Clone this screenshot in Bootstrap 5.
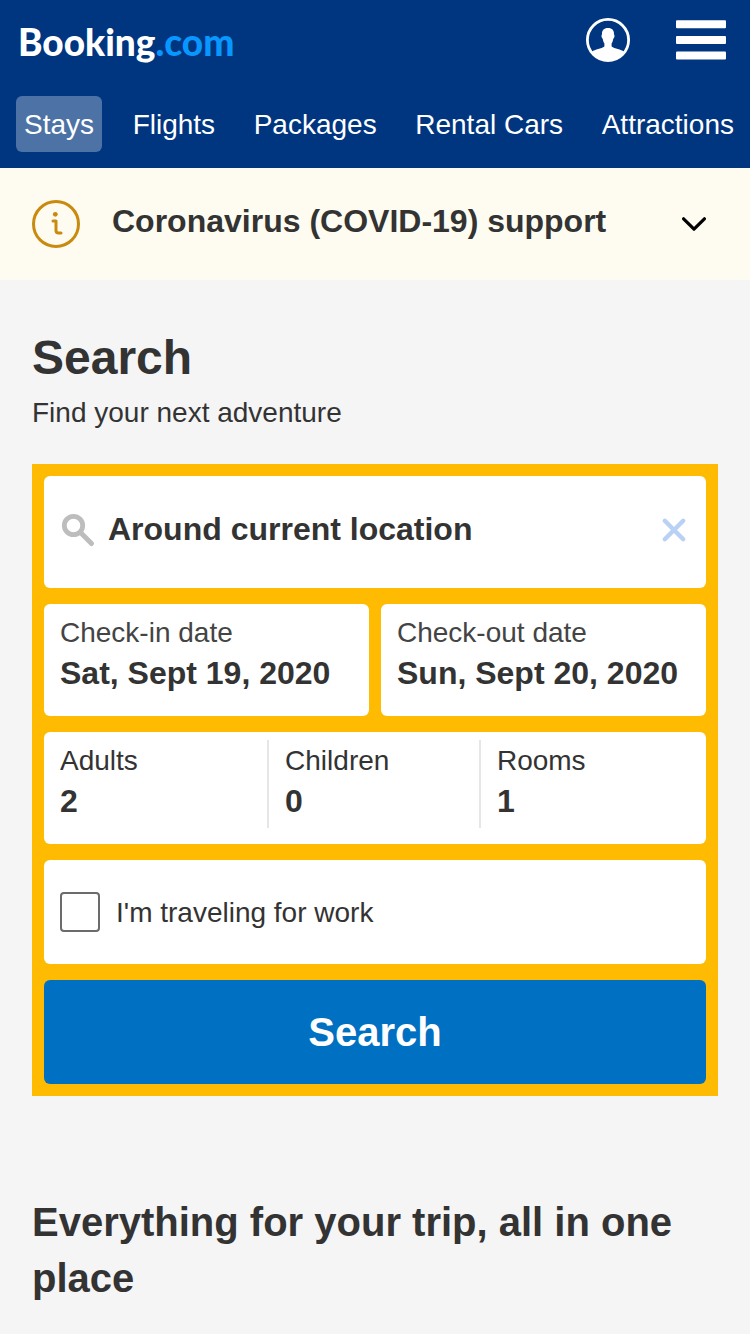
<!DOCTYPE html>
<html lang="en">
<head>
<meta charset="utf-8">
<meta name="viewport" content="width=device-width, initial-scale=1">
<title>Booking.com</title>
<link rel="stylesheet" href="https://cdn.jsdelivr.net/npm/bootstrap@5.3.0/dist/css/bootstrap.min.css">
<style>
body { font-family: "Liberation Sans", Arial, sans-serif; font-size: 28px; line-height: 40px; color: #333; background: #f5f5f5; }
.site-header { background: #003580; }
.top-row { padding: 10px 24px 22px 18px; }
.brand-logo { font-family: Lato, sans-serif; font-size: 37px; font-weight: 900; line-height: 64px; color: #fff; }
.brand-logo span { color: #0896ff; }
.tool-group { gap: 46px; margin-top: -4px; }
.tabs-row { padding: 0 8px 16px 16px; }
.tabs-row a { color: #fff; line-height: 54px; padding: 2px 8px 0; border-radius: 6px; }
.tabs-row a.active { background: #4d72a6; }
.notice-bar { background: #fefcf0; color: #333; padding: 32px 44px 32px 32px; min-height: 112px; }
.notice-title { font-size: 32px; font-weight: 700; margin: -6px 0 0 32px; }
.main-area { padding: 48px 32px 28px; }
.main-area h1 { font-size: 48px; line-height: 60px; font-weight: 700; }
.main-area h2 { font-size: 40px; line-height: 56px; font-weight: 700; margin-top: 98px; }
.sub-title { line-height: 42px; }
.search-box { background: #febb02; padding: 12px; gap: 16px; margin-top: 30px; }
.field-box { background: #fff; border-radius: 6px; }
.place-box { height: 112px; padding: 0 16px 4px; }
.bare { appearance: none; background: transparent; border: 0; padding: 0; width: 100%; min-width: 0; outline-offset: 2px; font-size: 32px; line-height: 40px; height: 40px; font-weight: 700; color: #333; }
.place-box .bare { padding-bottom: 2px; }
.date-row { display: grid; grid-template-columns: 1fr 1fr; gap: 12px; }
.date-box { padding: 9px 16px 23px; }
.date-box label { color: #444; }
.guest-box { display: grid; grid-template-columns: 226px 1fr 1fr; grid-template-columns: 34fr 32fr 34fr; padding: 8px 0 16px; }
.guest-cell { padding: 1px 16px 7px; }
.guest-cell:not(:last-child) { border-right: 2px solid #e6e6e6; }
.work-box { padding: 32px 16px; gap: 16px; }
.work-box label { padding-top: 2px; line-height: 38px; }
.work-box .form-check-input { width: 40px; height: 40px; margin: 0; border: 2px solid #6b6b6b; border-radius: 4px; }
.search-btn { background: #0071c2; color: #fff; font-size: 40px; font-weight: 700; line-height: 56px; padding: 24px; border: 0; border-radius: 6px; }
.search-btn:hover { background: #005999; color: #fff; }
</style>
</head>
<body>
<header class="site-header">
  <div class="top-row d-flex justify-content-between align-items-center">
    <a class="brand-logo text-decoration-none" href="#">Booking<span>.com</span></a>
    <div class="tool-group d-flex align-items-center">
      <button class="btn p-0 border-0 d-flex" type="button" aria-label="Your account">
        <svg width="44" height="44" viewBox="0 0 44 44"><circle cx="22" cy="22" r="20.6" fill="none" stroke="#fff" stroke-width="2.8"/><path fill="#fff" d="M22 10c4.200 0 6.300 2.500 6 6.600 1 .4.600 3.400-.8 4.400-.3 2.200-1 3.500-1.600 4.400v3.200c3 2.400 9.400 2.700 12.500 5.100C34.500 39.600 28.500 43 22 43S9.500 39.600 5.900 33.700c3.100-2.400 9.500-2.700 12.500-5.100v-3.200c-.6-.9-1.300-2.200-1.600-4.400-1.400-1-1.800-4-.8-4.400C15.700 12.500 17.800 10 22 10z"/></svg>
      </button>
      <button class="btn p-0 border-0 d-flex" type="button" aria-label="Menu">
        <svg width="50" height="40" viewBox="0 0 50 40" fill="#fff"><rect y=".3" width="50" height="8" rx="1"/><rect y="16" width="50" height="8" rx="1"/><rect y="31.500" width="50" height="8" rx="1"/></svg>
      </button>
    </div>
  </div>
  <nav class="tabs-row d-flex justify-content-between" aria-label="Products">
    <a class="active text-decoration-none" href="#" aria-current="page">Stays</a>
    <a class="text-decoration-none" href="#">Flights</a>
    <a class="text-decoration-none" href="#">Packages</a>
    <a class="text-decoration-none text-nowrap" href="#">Rental Cars</a>
    <a class="text-decoration-none" href="#">Attractions</a>
  </nav>
</header>
<button class="notice-bar btn rounded-0 border-0 w-100 d-flex align-items-center text-start" type="button" aria-expanded="false">
  <svg class="flex-shrink-0" width="48" height="48" viewBox="0 0 48 48" fill="none" stroke="#c98a10" stroke-linecap="round" stroke-linejoin="round"><circle cx="24" cy="24" r="22.500" stroke-width="3"/><path stroke-width="3" d="M21 21h3v9.500q0 2.500 2.500 2.500H29"/><circle cx="23.300" cy="14.300" r="2.400" fill="#c98a10" stroke="none"/></svg>
  <span class="notice-title flex-grow-1">Coronavirus (COVID-19) support</span>
  <svg class="flex-shrink-0" width="24" height="14" viewBox="0 0 24 14" fill="none" stroke="#000" stroke-width="3.200" stroke-linecap="round" stroke-linejoin="round"><path d="M1.600 1.800 12 12.200 22.400 1.800"/></svg>
</button>
<main class="main-area">
  <h1 class="mb-0">Search</h1>
  <p class="sub-title mb-0 mt-1">Find your next adventure</p>
  <form class="search-box d-flex flex-column">
    <div class="field-box place-box d-flex align-items-center">
      <svg class="flex-shrink-0" width="36" height="36" viewBox="0 0 36 36" fill="none" stroke="#bdbdbd"><circle cx="13.500" cy="13.500" r="9.200" stroke-width="4.800"/><path d="M20.500 20.500 31.500 31.500" stroke-width="5" stroke-linecap="round"/></svg>
      <input class="bare ms-2 me-3 ps-1" type="text" value="Around current location" aria-label="Destination">
      <button class="btn p-0 border-0 d-flex flex-shrink-0" type="button" aria-label="Clear destination">
        <svg width="32" height="32" viewBox="0 0 32 32" fill="none" stroke="#b8d1f5" stroke-width="4.400" stroke-linecap="round"><path d="M6.800 6.800 25.200 25.200M25.200 6.800 6.800 25.200"/></svg>
      </button>
    </div>
    <div class="date-row">
      <div class="field-box date-box">
        <label class="d-block" for="checkin">Check-in date</label>
        <input class="bare d-block" id="checkin" type="text" value="Sat, Sept 19, 2020">
      </div>
      <div class="field-box date-box">
        <label class="d-block" for="checkout">Check-out date</label>
        <input class="bare d-block" id="checkout" type="text" value="Sun, Sept 20, 2020">
      </div>
    </div>
    <div class="field-box guest-box">
      <div class="guest-cell">
        <label class="d-block" for="adults">Adults</label>
        <select class="bare d-block" id="adults"><option>1</option><option selected>2</option><option>3</option><option>4</option></select>
      </div>
      <div class="guest-cell">
        <label class="d-block" for="children">Children</label>
        <select class="bare d-block" id="children"><option selected>0</option><option>1</option><option>2</option></select>
      </div>
      <div class="guest-cell">
        <label class="d-block" for="rooms">Rooms</label>
        <select class="bare d-block" id="rooms"><option selected>1</option><option>2</option><option>3</option></select>
      </div>
    </div>
    <div class="field-box work-box d-flex align-items-center">
      <input class="form-check-input flex-shrink-0" type="checkbox" id="work">
      <label for="work">I'm traveling for work</label>
    </div>
    <button class="btn search-btn" type="submit">Search</button>
  </form>
  <h2 class="mb-0">Everything for your trip, all in one place</h2>
</main>
<script src="https://cdn.jsdelivr.net/npm/bootstrap@5.3.0/dist/js/bootstrap.bundle.min.js"></script>
</body>
</html>
